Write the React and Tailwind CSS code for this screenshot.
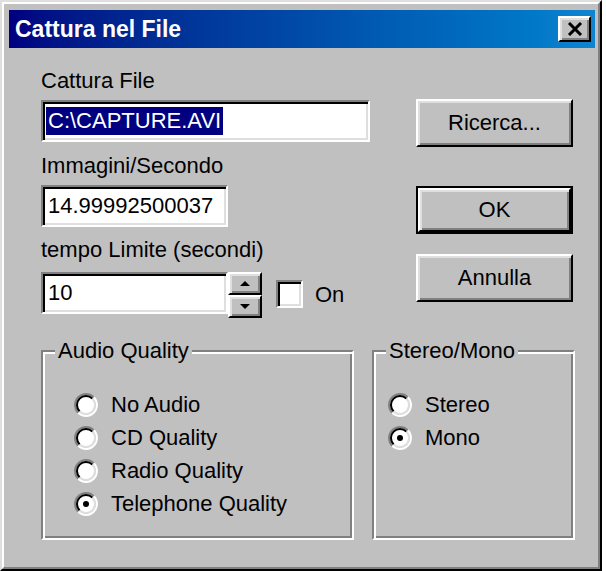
import React from "react";

// Win98-style "Cattura nel File" dialog, drawn at 2x scale
const raised =
  "border-2 border-t-white border-l-white border-r-black border-b-black bg-[#c0c0c0] shadow-[inset_2px_2px_0_#dfdfdf,inset_-2px_-2px_0_#808080]";
const sunken =
  "border-2 border-t-[#808080] border-l-[#808080] border-r-white border-b-white bg-white shadow-[inset_2px_2px_0_#000,inset_-2px_-2px_0_#dfdfdf]";
const etched =
  "border-2 border-t-[#808080] border-l-[#808080] border-r-white border-b-white shadow-[inset_2px_2px_0_#fff,inset_-2px_-2px_0_#808080]";

function Radio({ checked }) {
  return (
    <svg width="24" height="24" viewBox="0 0 12 12" className="shrink-0">
      <circle cx="6" cy="6" r="4.2" fill="#fff" />
      <path d="M2.111 9.889A5.5 5.5 0 0 1 9.889 2.111" fill="none" stroke="#808080" strokeWidth="1" />
      <path d="M9.889 2.111A5.5 5.5 0 0 1 2.111 9.889" fill="none" stroke="#fff" strokeWidth="1" />
      <path d="M2.818 9.182A4.5 4.5 0 0 1 9.182 2.818" fill="none" stroke="#000" strokeWidth="1" />
      <path d="M9.182 2.818A4.5 4.5 0 0 1 2.818 9.182" fill="none" stroke="#dfdfdf" strokeWidth="1" />
      {checked && <circle cx="6" cy="6" r="1.5" fill="#000" />}
    </svg>
  );
}

function RadioRow({ label, checked }) {
  return (
    <div className="flex h-[33px] items-center gap-[13px]">
      <Radio checked={checked} />
      <span>{label}</span>
    </div>
  );
}

function Group({ title, className, children }) {
  return (
    <div className={`relative h-[190px] ${etched} ${className}`}>
      <div className="absolute -top-[13px] left-[12px] bg-[#c0c0c0] px-[3px] leading-[24px]">{title}</div>
      {children}
    </div>
  );
}

function Button({ children }) {
  return <div className={`flex h-[48px] w-[157px] items-center justify-center ${raised}`}>{children}</div>;
}

export default function App() {
  return (
    <div className="h-[571px] w-[606px] bg-white font-['Liberation_Sans',Arial,sans-serif] text-[22px] leading-[24px] text-black">
      <div className="h-[571px] w-[602px] border-2 border-t-[#dfdfdf] border-l-[#dfdfdf] border-r-black border-b-black">
        <div className="flex h-full flex-col border-2 border-t-white border-l-white border-r-[#808080] border-b-[#808080] bg-[#c0c0c0] pl-[5px] pr-[3px] pt-[6px]">
          {/* title bar */}
          <div className="flex h-[38px] shrink-0 items-center justify-between bg-gradient-to-r from-[#000080] to-[#1084d0] pl-[6px] pr-[4px]">
            <span className="text-[23px] font-bold text-white">Cattura nel File</span>
            <div className={`flex h-[26px] w-[33px] items-center justify-center ${raised}`}>
              <svg width="16" height="14" viewBox="0 0 16 14">
                <path d="M2 1L14 13M14 1L2 13" stroke="#000" strokeWidth="3" />
              </svg>
            </div>
          </div>

          <div className="flex flex-col pl-[32px] pt-[21px]">
            <div className="flex">
              {/* left column */}
              <div className="flex w-[329px] flex-col">
                <div>Cattura File</div>
                <div className={`mt-[7px] flex h-[42px] items-center pl-[3px] ${sunken}`}>
                  <span className="bg-[#000080] px-[2px] leading-[28px] text-white">C:\CAPTURE.AVI</span>
                </div>
                <div className="mt-[12px]">Immagini/Secondo</div>
                <div className={`mt-[7px] flex h-[42px] w-[187px] items-center pl-[5px] ${sunken}`}>14.99992500037</div>
                <div className="mt-[11px]">tempo Limite (secondi)</div>
                <div className="mt-[10px] flex items-start">
                  <div className={`flex h-[42px] w-[187px] items-center pl-[5px] ${sunken}`}>10</div>
                  <div className="flex w-[34px] flex-col">
                    <div className={`flex h-[23px] items-center justify-center ${raised}`}>
                      <svg width="10" height="5" viewBox="0 0 10 5">
                        <path d="M5 0L10 5H0Z" fill="#000" />
                      </svg>
                    </div>
                    <div className={`flex h-[23px] items-center justify-center ${raised}`}>
                      <svg width="10" height="5" viewBox="0 0 10 5">
                        <path d="M0 0H10L5 5Z" fill="#000" />
                      </svg>
                    </div>
                  </div>
                  <div className={`ml-[14px] mt-[8px] h-[28px] w-[27px] ${sunken}`} />
                  <span className="ml-[12px] mt-[11px]">On</span>
                </div>
              </div>

              {/* right column */}
              <div className="ml-[46px] flex flex-col">
                <div className="mt-[30px]">
                  <Button>Ricerca...</Button>
                </div>
                <div className="mt-[39px] border-2 border-black">
                  <div className={`flex h-[44px] w-[153px] items-center justify-center ${raised}`}>OK</div>
                </div>
                <div className="mt-[20px]">
                  <Button>Annulla</Button>
                </div>
              </div>
            </div>

            {/* option groups */}
            <div className="mt-[32px] flex gap-[18px]">
              <Group title="Audio Quality" className="w-[313px] pl-[31px] pt-[36px]">
                <RadioRow label="No Audio" />
                <RadioRow label="CD Quality" />
                <RadioRow label="Radio Quality" />
                <RadioRow label="Telephone Quality" checked />
              </Group>
              <Group title="Stereo/Mono" className="w-[203px] pl-[14px] pt-[36px]">
                <RadioRow label="Stereo" />
                <RadioRow label="Mono" checked />
              </Group>
            </div>
          </div>
        </div>
      </div>
    </div>
  );
}
